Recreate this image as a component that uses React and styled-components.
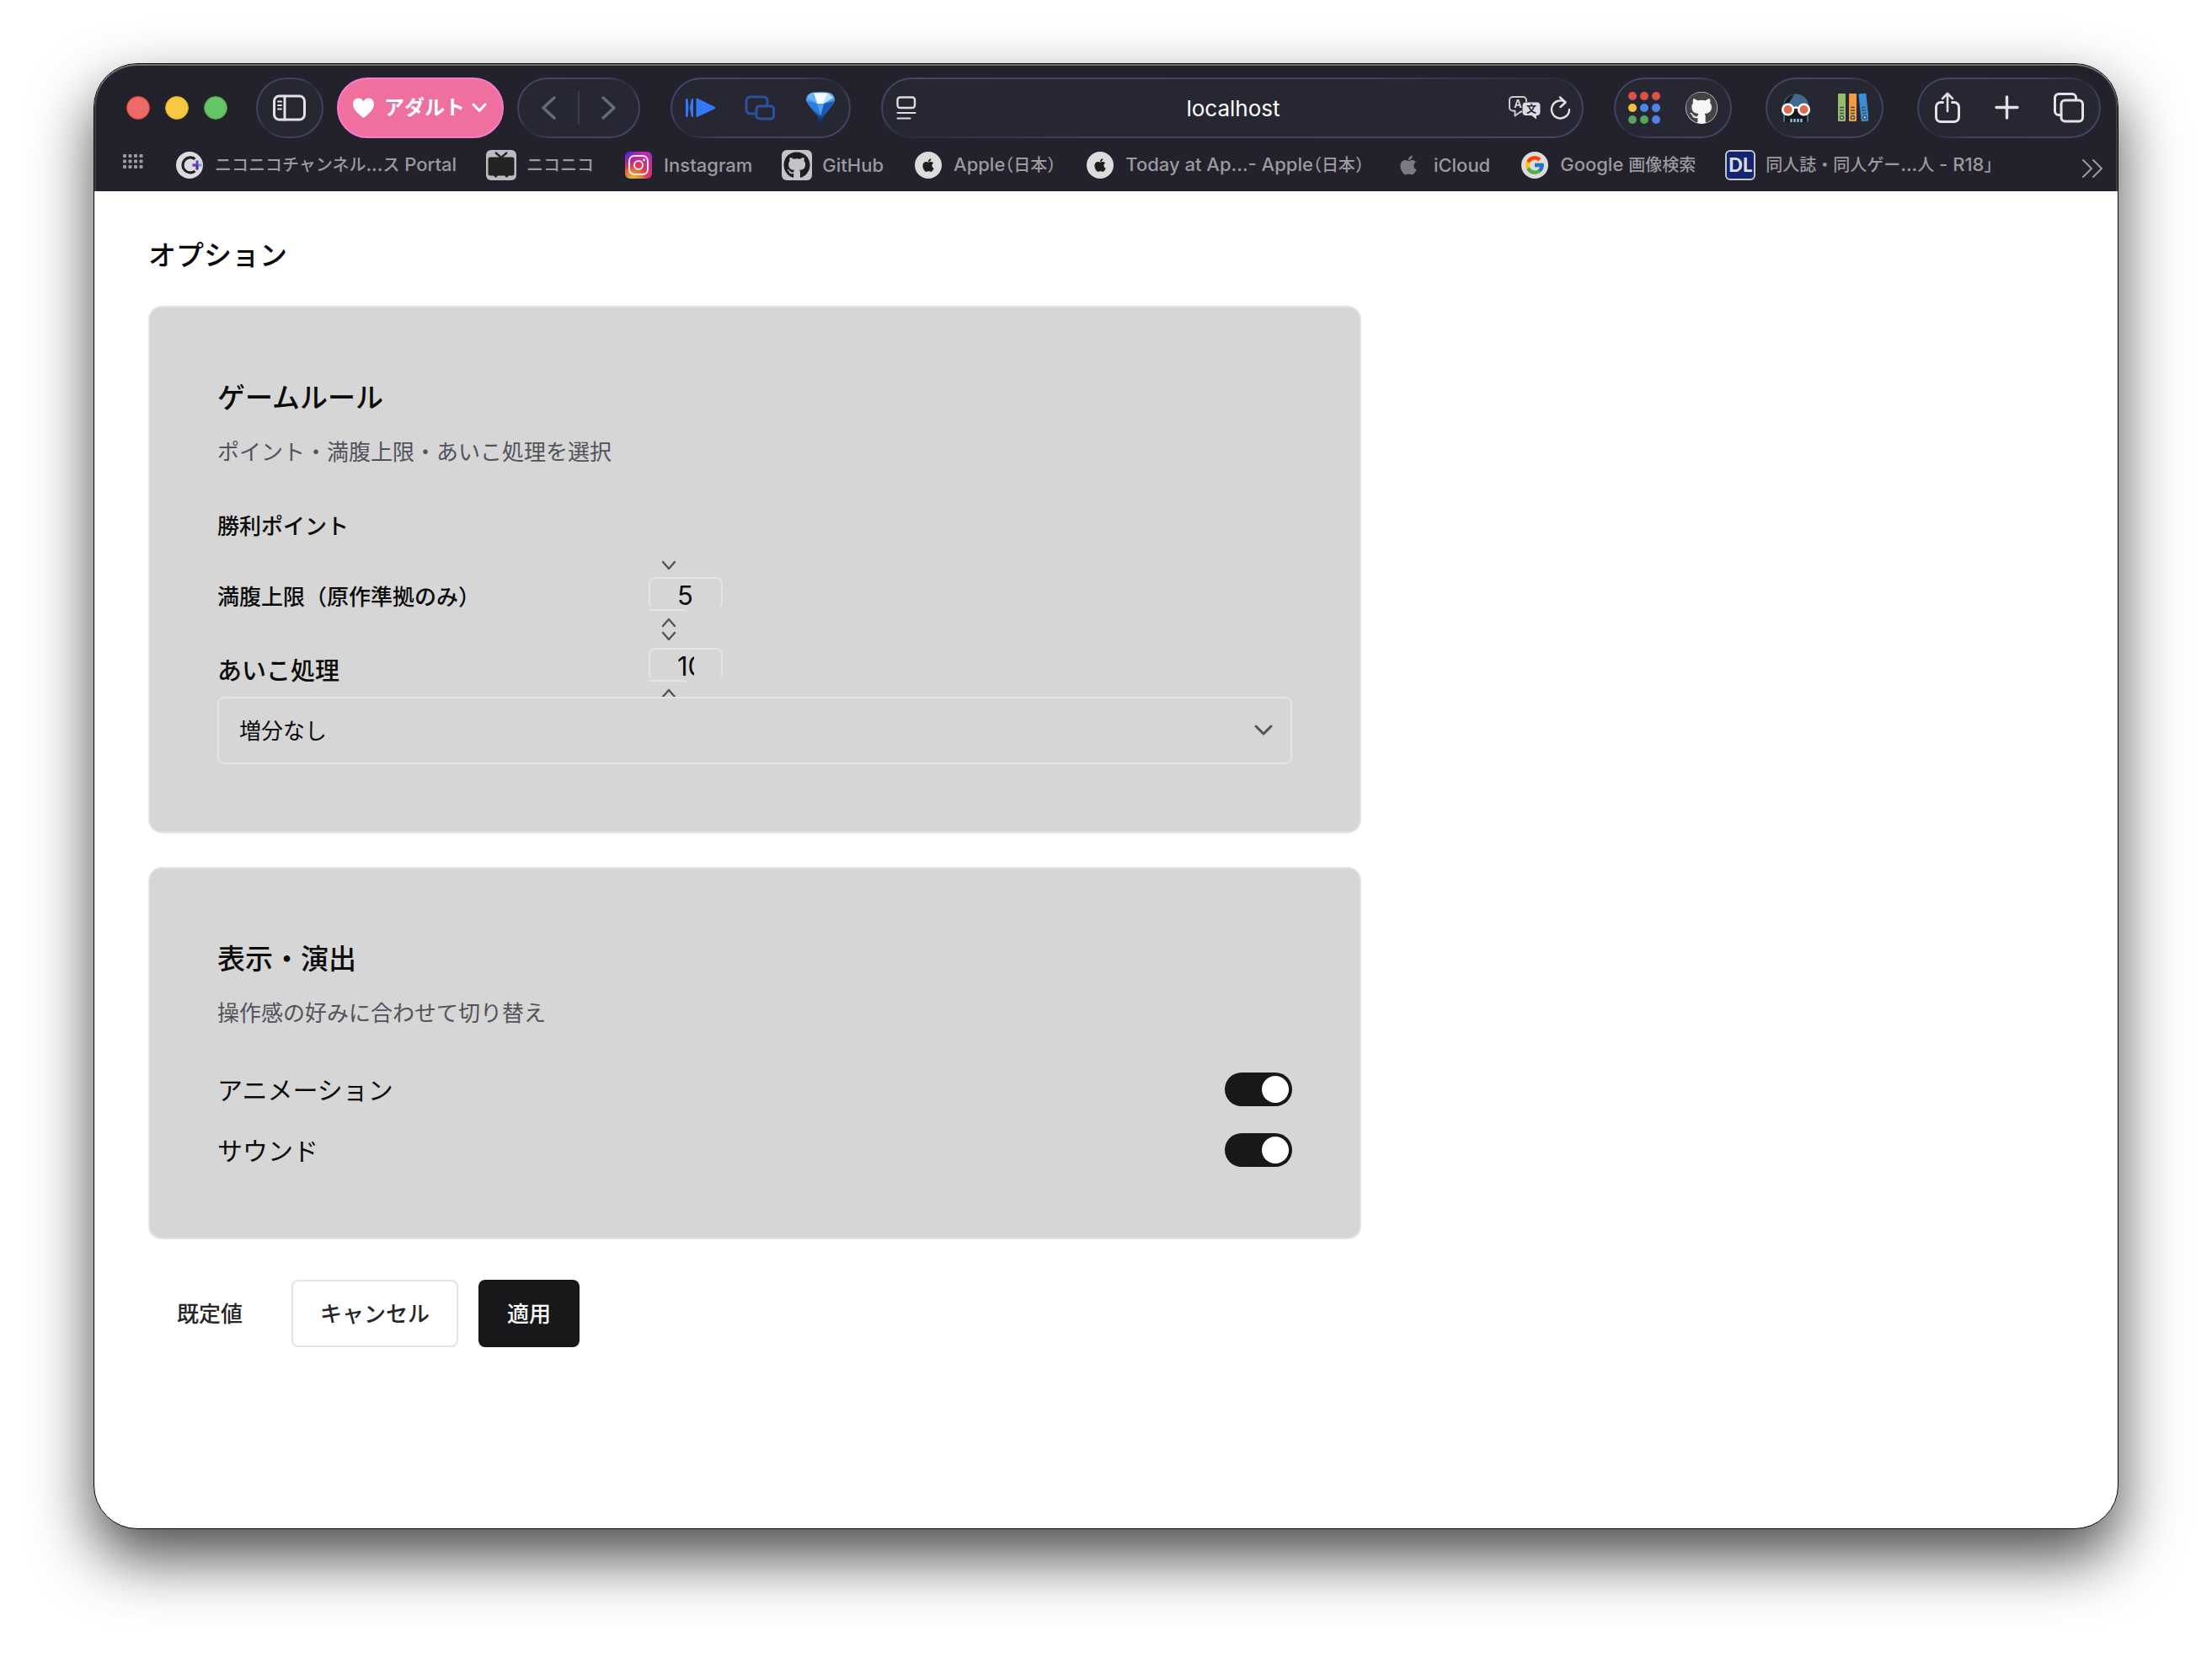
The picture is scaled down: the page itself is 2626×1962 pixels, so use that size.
import React, { useState } from "react";
import styled, { createGlobalStyle, css } from "styled-components";
import { FaApple, FaGithub } from "react-icons/fa";
import { FcGoogle } from "react-icons/fc";

const color = {
  chrome: "#22212c",
  pill: "#262733",
  icon: "#e2e2e4",
  muted: "#9a9a9f",
  line: "#e4e4e4",
  card: "#d6d6d6",
  text: "#0b0b0c",
  subtle: "#52525b",
  dark: "#18181a",
};

const GlobalStyle = createGlobalStyle`
  *, *::before, *::after { box-sizing: border-box; }
  body {
    margin: 0;
    background: #fff;
    color: ${color.text};
    font-family: Inter, "Noto Sans CJK JP", sans-serif;
  }
  button, input, select { font: inherit; color: inherit; margin: 0; }
  svg { display: block; flex: none; }
`;

const Desktop = styled.div`
  min-height: 100vh;
  display: flex;
  padding: 75px 111px 147px;
`;

const Window = styled.div`
  flex: 1;
  min-width: 0;
  display: flex;
  flex-direction: column;
  overflow: hidden;
  border: 1px solid #060606;
  border-radius: 52px;
  background: #fff;
  box-shadow: 0 34px 72px rgba(0, 0, 0, 0.7);
`;

/* ---------- browser chrome ---------- */

const Chrome = styled.header`
  background: ${color.chrome};
  border-radius: 51px 51px 0 0;
  box-shadow: inset 0 2px 0 #6c6f70, inset 2px 0 0 #41414a, inset -2px 0 0 #41414a;
`;

const Toolbar = styled.div`
  display: flex;
  align-items: center;
  gap: 36px;
  padding: 16px 20px 0 38px;
`;

const Cluster = styled.div`
  display: flex;
  align-items: center;
  gap: ${(p) => p.$gap}px;
`;

const Lights = styled.div`
  display: flex;
  gap: 18px;
  margin-right: 18px;
`;

const Light = styled.button`
  width: 28px;
  height: 28px;
  padding: 0;
  border-radius: 50%;
  border: 1px solid ${(p) => p.$edge};
  background: ${(p) => p.$fill};
`;

const pill = css`
  height: 72px;
  border: 2px solid transparent;
  border-radius: 36px;
  background: linear-gradient(${color.pill}, ${color.pill}) padding-box,
    linear-gradient(to bottom right, #45476b 0%, #3e4061 36%, #2a2b38 50%, #3e4061 64%, #45476b 100%) border-box;
`;

const Pill = styled.div`
  ${pill}
  display: flex;
  align-items: center;
  gap: ${(p) => p.$gap}px;
  padding: 0 ${(p) => p.$pad || 16}px;
`;

const PillButton = styled.button`
  ${pill}
  width: 80px;
  padding: 0;
  display: flex;
  align-items: center;
  justify-content: center;
`;

const ProfileButton = styled.button`
  height: 72px;
  padding: 0 18px 0 16px;
  display: flex;
  align-items: center;
  gap: 8px;
  border: 2px solid #f97bd3;
  border-radius: 36px;
  background: #ef709f;
  color: #fff;
  font-size: 24px;
  line-height: 32px;
  font-weight: 700;
`;

const IconButton = styled.button`
  width: ${(p) => p.$size || 36}px;
  height: 38px;
  padding: 0;
  border: 0;
  background: none;
  display: flex;
  align-items: center;
  justify-content: center;
`;

const Divider = styled.span`
  width: 2px;
  height: 40px;
  background: #3b3c49;
`;

const AddressBar = styled.div`
  ${pill}
  flex: 1;
  min-width: 0;
  display: grid;
  grid-template-columns: 1fr 400px 1fr;
  align-items: center;
  padding: 0 8px 0 10px;
`;

const AddressInput = styled.input`
  width: 100%;
  border: 0;
  padding: 2px 0 0;
  background: none;
  color: #fff;
  text-align: center;
  font-size: 26px;
  line-height: 36px;
  outline: none;
`;

const AddressActions = styled.div`
  display: flex;
  align-items: center;
  justify-content: flex-end;
  gap: 4px;
`;

const GithubBadge = styled.span`
  display: flex;
  border-radius: 50%;
  background: #f5f5f5;
  color: #444;
  font-size: 38px;
`;

const Bookmarks = styled.nav`
  height: 63px;
  display: flex;
  align-items: center;
  gap: 35px;
  padding: 0 12px 0 34px;
  font-size: 22px;
  line-height: 32px;
`;

const BookmarkLink = styled.a`
  display: flex;
  align-items: center;
  gap: 12px;
  color: ${color.muted};
  font-weight: 500;
  text-decoration: none;
  white-space: nowrap;
`;

const Ja = styled.span`
  font-size: 20px;
`;

const Bracket = styled(Ja)`
  font-feature-settings: "halt";
`;

const Favicon = styled.span`
  width: 36px;
  height: 36px;
  display: flex;
  align-items: center;
  justify-content: center;
`;

const Tile = styled.span`
  width: ${(p) => p.$size}px;
  height: ${(p) => p.$size}px;
  display: flex;
  align-items: center;
  justify-content: center;
  border-radius: ${(p) => p.$radius};
  background: ${(p) => p.$fill};
  color: #1d1d1f;
  overflow: hidden;
`;

const DlTile = styled(Tile)`
  border: 2px solid #c6c6cc;
  color: #dcdce2;
  font-family: Lato, sans-serif;
  font-size: 22px;
  line-height: 24px;
  font-weight: 900;
`;

const MoreButton = styled(IconButton)`
  margin-left: auto;
`;

/* ---------- options page ---------- */

const Page = styled.main`
  padding: 50px 64px;
`;

const Content = styled.form`
  max-width: 1440px;
  display: flex;
  flex-direction: column;
`;

const PageTitle = styled.h1`
  margin: 0 0 34px;
  font-size: 33px;
  line-height: 52px;
  font-weight: 500;
`;

const Card = styled.section`
  padding: 80px;
  border: 2px solid ${color.line};
  border-radius: 16px;
  background: ${color.card};
  & + & { margin-top: 40px; }
`;

const CardTitle = styled.h2`
  margin: 0;
  font-size: 33px;
  line-height: 54px;
  font-weight: 500;
`;

const CardNote = styled.p`
  margin: 20px 0 48px;
  color: ${color.subtle};
  font-size: 26px;
  line-height: 36px;
`;

const FieldRow = styled.div`
  height: 40px;
  margin-bottom: 44px;
  display: grid;
  grid-template-columns: 512px auto;
  align-items: start;
`;

const FieldLabel = styled.label`
  padding-top: 2px;
  font-size: 26px;
  line-height: 40px;
  font-weight: 500;
`;

const Stepper = styled.div`
  width: 88px;
  padding-top: 54px;
  display: flex;
  flex-direction: column;
  align-items: flex-start;
`;

const StepButton = styled.button`
  width: 48px;
  height: 28px;
  padding: 0;
  border: 0;
  background: none;
  display: flex;
  align-items: center;
  justify-content: center;
`;

const StepUpButton = styled(StepButton)`
  height: 30px;
  padding-left: 2px;
  border-top: 2px solid ${color.line};
  border-right: 2px solid transparent;
  border-top-right-radius: 8px;
`;

const StepInput = styled.input`
  width: 88px;
  height: 38px;
  padding: 4px 32px 0;
  border: 2px solid ${color.line};
  border-bottom-color: transparent;
  border-radius: 8px;
  background: none;
  font-size: 31px;
  line-height: 30px;
  outline: none;
`;

const SelectLabel = styled.label`
  display: block;
  padding-top: 2px;
  margin-bottom: 6px;
  font-size: 29px;
  line-height: 48px;
  font-weight: 500;
`;

const SelectBox = styled.div`
  position: relative;
`;

const Select = styled.select`
  display: block;
  width: 100%;
  height: 80px;
  padding: 2px 24px 0;
  appearance: none;
  border: 2px solid ${color.line};
  border-radius: 8px;
  background: ${color.card};
  font-size: 26px;
  line-height: 36px;
`;

const SelectArrow = styled.span`
  position: absolute;
  right: 20px;
  top: 26px;
  pointer-events: none;
`;

const SwitchRow = styled.label`
  display: flex;
  align-items: center;
  justify-content: space-between;
  & + & { margin-top: 24px; }
`;

const SwitchText = styled.span`
  padding-top: 2px;
  font-size: 30px;
  line-height: 46px;
`;

const Switch = styled.input`
  appearance: none;
  width: 80px;
  height: 40px;
  padding: 4px;
  border-radius: 20px;
  background: #a1a1aa;
  display: flex;
  &:checked { background: ${color.dark}; justify-content: flex-end; }
  &::before {
    content: "";
    width: 32px;
    height: 32px;
    border-radius: 50%;
    background: #fff;
  }
`;

const Actions = styled.div`
  display: flex;
  gap: 24px;
  margin-top: 48px;
`;

const variants = {
  ghost: css`border-color: transparent; background: none; color: #27272a;`,
  outline: css`border-color: ${color.line}; background: #fff; color: #27272a;`,
  solid: css`border-color: ${color.dark}; background: ${color.dark}; color: #fff;`,
};

const Button = styled.button`
  height: 80px;
  padding: 2px 32px 0;
  border: 2px solid;
  border-radius: 8px;
  font-size: 26px;
  line-height: 36px;
  font-weight: 500;
  ${(p) => variants[p.$variant]}
`;

/* ---------- drawings ---------- */

function Stroke({ w, h, c = color.icon, sw = 3, children }) {
  return (
    <svg width={w} height={h} viewBox={`0 0 ${w} ${h}`} fill="none" stroke={c} strokeWidth={sw} strokeLinecap="round" strokeLinejoin="round" aria-hidden="true">
      {children}
    </svg>
  );
}

const SidebarIcon = () => (
  <Stroke w={40} h={32}>
    <rect x="1.500" y="2" width="36" height="28" rx="6" />
    <path d="M14 2v28" />
    <path d="M6 8.500h4M6 13h4M6 17.500h4" strokeWidth="1.800" />
  </Stroke>
);

const HeartIcon = () => (
  <svg width="30" height="26" viewBox="0 0 30 26" aria-hidden="true">
    <path fill="#fff" d="M13.500 25C6.500 20 1 14.500 1 8.300 1 4.300 3.900 1.500 7.500 1.500c2.500 0 4.700 1.400 6 3.700 1.300-2.300 3.500-3.700 6-3.700 3.600 0 6.500 2.800 6.500 6.800C26 14.500 20.500 20 13.500 25z" />
  </svg>
);

const ProfileArrow = () => (
  <Stroke w={18} h={12} c="#fff" sw={3}><path d="M2 2l7 7.500L16 2" /></Stroke>
);

const BackIcon = () => <Stroke w={18} h={30} c="#696b77" sw={3.5}><path d="M16 3L3 15l13 12" /></Stroke>;
const ForwardIcon = () => <Stroke w={18} h={30} c="#696b77" sw={3.5}><path d="M2 3l13 12L2 27" /></Stroke>;

const SkipPlayIcon = () => (
  <svg width="36" height="26" viewBox="0 0 36 26" fill="#3478f6" aria-hidden="true">
    <path d="M12.500 2.500Q12.500 1 14 1.800L34.500 11.800Q36 13 34.500 14.200L14 23.800Q12.500 24.500 12.500 23z" />
    <path d="M0 2.500Q2 1 2.700 3.500L3.500 13 2.700 22.500Q2 25 0 23.500z" />
    <path d="M9 2Q7 1.500 6.500 4L4.800 13 6.500 22Q7 24.500 9 24z" />
  </svg>
);

const PipIcon = () => (
  <Stroke w={36} h={30} c="#2b519f" sw={3}>
    <path d="M13 22H6.500a4.500 4.500 0 0 1-4.500-4.500V6.500A4.500 4.500 0 0 1 6.500 2h16A4.500 4.500 0 0 1 27 6.500V12" />
    <rect x="14" y="13" width="20.500" height="15" rx="3.500" />
  </Stroke>
);

const DiamondIcon = () => (
  <svg width="38" height="38" viewBox="-2 0 38 38" aria-hidden="true">
    <defs>
      <linearGradient id="gemBody" x1="0" y1="0" x2="0" y2="1">
        <stop offset="0" stopColor="#7cc4ff" />
        <stop offset=".45" stopColor="#2f7fe0" />
        <stop offset="1" stopColor="#06214d" />
      </linearGradient>
    </defs>
    <path d="M1 9Q2 2 9 .8 18-.5 27 .8 34 2 35 9 35 12 31 17L22 29 20 37Q18 39 16 37L14.500 29 5 17Q1 12 1 9z" fill="url(#gemBody)" />
    <path d="M10 1.500L26 1.500 22 14 14 14z" fill="#f4fbff" />
    <path d="M26 1.500L33 7 22 14z" fill="#bfe2ff" />
    <path d="M10 1.500L3 7 14 14z" fill="#63b4f7" />
    <path d="M2 11l12 3 3 14L5 17z" fill="#2d7be0" />
    <path d="M34 11l-12 3-3 14 12-11z" fill="#1a59b5" />
    <path d="M14 14h8l-4 15z" fill="#4d9df0" />
  </svg>
);

const ReaderIcon = () => (
  <Stroke w={24} h={30} c="#dcdcdf" sw={2.4}>
    <rect x="1.500" y="2.500" width="20.500" height="12.500" rx="3" />
    <path d="M1.500 21h21M1.500 27.500h15" strokeWidth="2" />
  </Stroke>
);

const TranslateIcon = () => (
  <svg width="40" height="30" viewBox="0 0 40 30" aria-hidden="true">
    <path d="M17 19l-3 1.500-5.500 4V18.500H6a4 4 0 0 1-4-4V6a4 4 0 0 1 4-4h12a4 4 0 0 1 4 4v2" fill="none" stroke="#c9c9cf" strokeWidth="2" strokeLinejoin="round" />
    <path d="M21.500 8.500h13a4 4 0 0 1 4 4v7.500a4 4 0 0 1-4 4H34v4.500L28 24h-6.500a4 4 0 0 1-4-4v-7.500a4 4 0 0 1 4-4z" fill="#dcdce2" />
    <text x="12" y="15" textAnchor="middle" fontSize="13" fontWeight="600" fill="#dcdce2">A</text>
    <text x="28" y="21" textAnchor="middle" fontSize="12" fontWeight="700" fill="#262733">文</text>
  </svg>
);

const ReloadIcon = () => (
  <Stroke w={26} h={30} sw={2.4}>
    <path d="M24 17A10.500 10.500 0 1 1 19 8" />
    <path d="M13 2.500L19.500 8.500l-6 5.500" />
  </Stroke>
);

const dotColors = ["#dc5140", "#dc5140", "#dc5140", "#f5bf3f", "#5283ec", "#5283ec", "#58a65c", "#58a65c", "#5283ec"];
const AppDots = () => (
  <svg width="38" height="38" viewBox="0 0 38 38" aria-hidden="true">
    {dotColors.map((c, i) => <circle key={i} cx={5 + (i % 3) * 14} cy={5 + Math.floor(i / 3) * 14} r="5" fill={c} />)}
  </svg>
);

const GogglesIcon = () => (
  <svg width="36" height="36" viewBox="0 0 36 36" aria-hidden="true">
    <path d="M3 16C3 7 10 1.500 18 1.500S33 7 33 16V19H3z" fill="#41698a" />
    <path d="M4 14C6 7 11 3 16 2L10 12 6 17z" fill="#171a20" />
    <path d="M3 22h30v13H3z" fill="#17191d" />
    <path d="M3 22h2v13H3zM31 22h2v13h-2z" fill="#41698a" />
    <path d="M12.500 31v4M16.500 31v4M20.500 31v4M24.500 31v4" stroke="#7fbde8" strokeWidth="2.500" />
    <circle cx="8.500" cy="20" r="6.300" fill="#e2694b" stroke="#fff" strokeWidth="2.600" />
    <circle cx="27.500" cy="20" r="6.300" fill="#e2694b" stroke="#fff" strokeWidth="2.600" />
    <path d="M14 19q4-3 8 0" fill="none" stroke="#fff" strokeWidth="2.600" />
  </svg>
);

const Book = ({ x, fill, turn = 0 }) => (
  <g transform={`translate(${x} 1) rotate(${turn} 4 16)`}>
    <rect width="9" height="33" rx="1" fill={fill} />
    <path d="M2 16.500h5M2 20h5M2 23.500h5" stroke="#444e58" strokeWidth="1.400" />
    <circle cx="4.500" cy="28.500" r="2" fill="#cfd4d8" stroke="#444e58" strokeWidth="1.500" />
  </g>
);
const BooksIcon = () => (
  <svg width="36" height="36" viewBox="0 0 36 36" aria-hidden="true">
    <Book x={0} fill="#97bd66" />
    <Book x={13} fill="#f39b3d" />
    <Book x={26} fill="#3b8fd4" turn={-6} />
  </svg>
);

const ShareIcon = () => (
  <Stroke w={36} h={38}>
    <path d="M12.500 12.500H10a5.500 5.500 0 0 0-5.500 5.500v12A5.500 5.500 0 0 0 10 35.500h16a5.500 5.500 0 0 0 5.500-5.500V18a5.500 5.500 0 0 0-5.500-5.500h-2.500" />
    <path d="M18 23V2.500M12 8l6-6 6 6" strokeWidth="2.600" />
  </Stroke>
);
const PlusIcon = () => <Stroke w={36} h={36} sw={3.4}><path d="M16.500 5v25M4 17.500h25" /></Stroke>;
const TabsIcon = () => (
  <Stroke w={38} h={36}>
    <path d="M9 26.500H6A4.500 4.500 0 0 1 1.500 22V6A4.500 4.500 0 0 1 6 1.500h16A4.500 4.500 0 0 1 26.500 6v2" />
    <rect x="9" y="9" width="25.500" height="25" rx="4.500" />
  </Stroke>
);

const GridIcon = () => (
  <svg width="26" height="26" viewBox="0 0 26 26" fill={color.muted} aria-hidden="true">
    {Array.from({ length: 12 }, (_, i) => <rect key={i} x={(i % 4) * 6.500} y={Math.floor(i / 4) * 6.500} width="4" height="4" rx="1" />)}
  </svg>
);

const ChannelMark = () => (
  <svg width="32" height="32" viewBox="0 0 32 32" aria-hidden="true">
    <path d="M22.500 8.800A9 9 0 1 0 22.500 23" fill="none" stroke="#232323" strokeWidth="3.200" />
    <path d="M19.500 16h11" stroke="#5aa9d6" strokeWidth="3" />
    <path d="M19.500 16h5.500M25 10.500v7" stroke="#7a35c4" strokeWidth="3" />
    <path d="M25 17v4.500" stroke="#3f2f8f" strokeWidth="3" />
  </svg>
);

const TvMark = () => (
  <svg width="36" height="36" viewBox="0 0 36 36" aria-hidden="true">
    <path d="M11 3l7 6 7-6" fill="none" stroke="#232323" strokeWidth="2.400" />
    <path d="M5 8.500h26a2.500 2.500 0 0 1 2.500 2.500v17a2.500 2.500 0 0 1-2.500 2.500h-4L24.500 33 22 30.500H14L11.500 33 9 30.500H5A2.500 2.500 0 0 1 2.500 28V11A2.500 2.500 0 0 1 5 8.500z" fill="#232323" />
  </svg>
);

const InstagramMark = () => (
  <svg width="32" height="32" viewBox="0 0 32 32" aria-hidden="true">
    <defs>
      <radialGradient id="igWarm" cx=".3" cy="1.05" r="1">
        <stop offset="0" stopColor="#e8c23f" />
        <stop offset=".3" stopColor="#e08a35" />
        <stop offset=".55" stopColor="#d63a55" />
        <stop offset="1" stopColor="#b52bb5" />
      </radialGradient>
      <radialGradient id="igCool" cx="0" cy="0" r=".6">
        <stop offset="0" stopColor="#3b22d8" />
        <stop offset="1" stopColor="#7a22d8" stopOpacity="0" />
      </radialGradient>
    </defs>
    <rect width="32" height="32" rx="6" fill="url(#igWarm)" />
    <rect width="32" height="32" rx="6" fill="url(#igCool)" />
    <rect x="5" y="5" width="22" height="22" rx="6" fill="none" stroke="#e6e6e6" strokeWidth="2" />
    <circle cx="16" cy="16" r="5" fill="none" stroke="#e6e6e6" strokeWidth="2" />
    <circle cx="22.500" cy="9.800" r="1.500" fill="#e6e6e6" />
  </svg>
);

const MoreIcon = () => (
  <Stroke w={26} h={32} c="#9a9a9f" sw={2}><path d="M2 10l10 10L2 30M14 10l10 10-10 10" /></Stroke>
);

const StepArrow = ({ up }) => (
  <Stroke w={18} h={12} c={color.subtle} sw={2.4}>
    <path d={up ? "M2 10l7-8 7 8" : "M2 2l7 8 7-8"} />
  </Stroke>
);

/* ---------- data ---------- */

const AppleJapan = () => (
  <>Apple<Bracket>（</Bracket><Ja>日本</Ja><Bracket>）</Bracket></>
);

const bookmarks = [
  { id: "channel", label: <><Ja>ニコニコチャンネル</Ja>...<Ja>ス</Ja> Portal</>, icon: <Tile $size={32} $radius="50%" $fill="#dcdce0"><ChannelMark /></Tile> },
  { id: "nico", label: <Ja>ニコニコ</Ja>, icon: <Tile $size={36} $radius="6px" $fill="#bcbcc0"><TvMark /></Tile> },
  { id: "instagram", label: "Instagram", icon: <InstagramMark /> },
  { id: "github", label: "GitHub", icon: <Tile $size={36} $radius="6px" $fill="#c4c3c9"><FaGithub size={32} /></Tile> },
  { id: "apple", label: <AppleJapan />, icon: <Tile $size={32} $radius="50%" $fill="#dcdcdd"><FaApple size={18} /></Tile> },
  { id: "today", label: <>Today at Ap...- <AppleJapan /></>, icon: <Tile $size={32} $radius="50%" $fill="#dcdcdd"><FaApple size={18} /></Tile> },
  { id: "icloud", label: "iCloud", icon: <FaApple size={26} color="#7c7c7e" /> },
  { id: "google", label: <>Google <Ja>画像検索</Ja></>, icon: <Tile $size={32} $radius="50%" $fill="#dcdcdd"><FcGoogle size={26} /></Tile> },
  { id: "dl", label: <><Ja>同人誌・同人ゲー</Ja>...<Ja>人</Ja> - R18<Bracket>」</Bracket></>, icon: <DlTile $size={36} $radius="6px" $fill="#14246f">DL</DlTile> },
];

function BrowserChrome() {
  return (
    <Chrome>
      <Toolbar>
        <Cluster $gap={16}>
          <Lights>
            <Light type="button" aria-label="閉じる" $fill="#ee6a66" $edge="#d9403c" />
            <Light type="button" aria-label="しまう" $fill="#f5c944" $edge="#dba520" />
            <Light type="button" aria-label="拡大" $fill="#65c466" $edge="#3ba33d" />
          </Lights>
          <PillButton type="button" aria-label="サイドバー"><SidebarIcon /></PillButton>
          <ProfileButton type="button"><HeartIcon />アダルト<ProfileArrow /></ProfileButton>
          <Pill $gap={17} $pad={17}>
            <IconButton type="button" aria-label="戻る"><BackIcon /></IconButton>
            <Divider />
            <IconButton type="button" aria-label="進む"><ForwardIcon /></IconButton>
          </Pill>
        </Cluster>
        <Pill $gap={34}>
          <IconButton type="button" aria-label="再生"><SkipPlayIcon /></IconButton>
          <IconButton type="button" aria-label="ピクチャ・イン・ピクチャ"><PipIcon /></IconButton>
          <IconButton type="button" aria-label="ダイヤモンド" $size={38}><DiamondIcon /></IconButton>
        </Pill>
        <AddressBar>
          <IconButton type="button" aria-label="ページメニュー"><ReaderIcon /></IconButton>
          <AddressInput aria-label="アドレス" defaultValue="localhost" />
          <AddressActions>
            <IconButton type="button" aria-label="翻訳" $size={40}><TranslateIcon /></IconButton>
            <IconButton type="button" aria-label="再読み込み"><ReloadIcon /></IconButton>
          </AddressActions>
        </AddressBar>
        <Cluster $gap={40}>
          <Pill $gap={30} $pad={15}>
            <IconButton type="button" aria-label="アプリ" $size={38}><AppDots /></IconButton>
            <IconButton type="button" aria-label="GitHub" $size={38}><GithubBadge><FaGithub /></GithubBadge></IconButton>
          </Pill>
          <Pill $gap={32}>
            <IconButton type="button" aria-label="ゴーグル"><GogglesIcon /></IconButton>
            <IconButton type="button" aria-label="ライブラリ"><BooksIcon /></IconButton>
          </Pill>
          <Pill $gap={36}>
            <IconButton type="button" aria-label="共有"><ShareIcon /></IconButton>
            <IconButton type="button" aria-label="新規タブ"><PlusIcon /></IconButton>
            <IconButton type="button" aria-label="タブ一覧" $size={38}><TabsIcon /></IconButton>
          </Pill>
        </Cluster>
      </Toolbar>
      <Bookmarks aria-label="お気に入り">
        <GridIcon />
        {bookmarks.map((b) => (
          <BookmarkLink key={b.id} href="#">
            <Favicon>{b.icon}</Favicon>
            <span>{b.label}</span>
          </BookmarkLink>
        ))}
        <MoreButton type="button" aria-label="さらに表示"><MoreIcon /></MoreButton>
      </Bookmarks>
    </Chrome>
  );
}

function NumberField({ id, label, initial }) {
  const [value, setValue] = useState(initial);
  return (
    <FieldRow>
      <FieldLabel htmlFor={id}>{label}</FieldLabel>
      <Stepper>
        <StepButton type="button" aria-label="減らす" onClick={() => setValue(value - 1)}><StepArrow /></StepButton>
        <StepInput id={id} inputMode="numeric" value={value} onChange={(e) => setValue(Number(e.target.value) || 0)} />
        <StepUpButton type="button" aria-label="増やす" onClick={() => setValue(value + 1)}><StepArrow up /></StepUpButton>
      </Stepper>
    </FieldRow>
  );
}

export default function App() {
  return (
    <>
      <GlobalStyle />
      <Desktop lang="ja">
        <Window>
          <BrowserChrome />
          <Page>
            <Content onSubmit={(e) => e.preventDefault()}>
              <PageTitle>オプション</PageTitle>
              <Card>
                <CardTitle>ゲームルール</CardTitle>
                <CardNote>ポイント・満腹上限・あいこ処理を選択</CardNote>
                <NumberField id="win-points" label="勝利ポイント" initial={5} />
                <NumberField id="full-limit" label="満腹上限（原作準拠のみ）" initial={10} />
                <SelectLabel htmlFor="draw-rule">あいこ処理</SelectLabel>
                <SelectBox>
                  <Select id="draw-rule" defaultValue="none">
                    <option value="none">増分なし</option>
                  </Select>
                  <SelectArrow>
                    <Stroke w={28} h={28} c={color.subtle} sw={3}><path d="M5 9l9 9 9-9" /></Stroke>
                  </SelectArrow>
                </SelectBox>
              </Card>
              <Card>
                <CardTitle>表示・演出</CardTitle>
                <CardNote>操作感の好みに合わせて切り替え</CardNote>
                <SwitchRow>
                  <SwitchText>アニメーション</SwitchText>
                  <Switch type="checkbox" role="switch" defaultChecked />
                </SwitchRow>
                <SwitchRow>
                  <SwitchText>サウンド</SwitchText>
                  <Switch type="checkbox" role="switch" defaultChecked />
                </SwitchRow>
              </Card>
              <Actions>
                <Button type="reset" $variant="ghost">既定値</Button>
                <Button type="button" $variant="outline">キャンセル</Button>
                <Button type="submit" $variant="solid">適用</Button>
              </Actions>
            </Content>
          </Page>
        </Window>
      </Desktop>
    </>
  );
}
